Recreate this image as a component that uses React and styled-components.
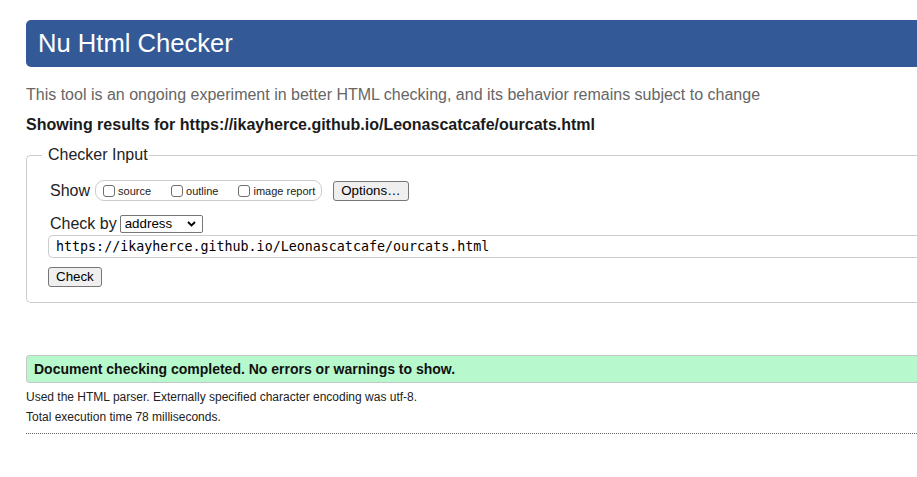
import React from 'react'
import styled, { createGlobalStyle } from 'styled-components'

const Global = createGlobalStyle`
  body {
    margin: 0;
    overflow: hidden;
    background: #fff;
    font-family: "Liberation Sans", Arial, sans-serif;
    color: #1a1a1a;
  }
`

// the page is cut off on the right in the screenshot, so the boxes
// just run into the right edge without a right border
const Page = styled.div`
  padding: 20px 0 0 26px;
`

const Header = styled.h1`
  margin: 0;
  height: 47px;
  line-height: 47px;
  padding-left: 12px;
  background: #335a97;
  color: #fff;
  font-size: 25.6px;
  font-weight: normal;
  border-radius: 5px 0 0 5px;
`

const Intro = styled.p`
  margin: 18px 0 0;
  font-size: 16px;
  line-height: 20px;
  color: #666;
  white-space: nowrap;
`

const Results = styled.p`
  margin: 10px 0 0;
  font-size: 16px;
  line-height: 20px;
  font-weight: bold;
  color: #1a1a1a;
  white-space: nowrap;
`

const Fieldset = styled.fieldset`
  margin: 10px 0 0;
  min-width: 0;
  border: 1px solid #ccc;
  border-right: 0;
  border-radius: 5px 0 0 5px;
  padding: 15px 0 15px 21px;
`

const Legend = styled.legend`
  font-size: 16px;
  line-height: 20px;
  padding: 0 1px 0 6px;
  margin-left: -6px;
  color: #222;
`

const Row = styled.div`
  display: flex;
  align-items: center;
  height: 21px;
  margin-top: ${p => p.$top || 0}px;
`

const Label = styled.span`
  font-size: 16px;
  margin-left: 2px;
  color: #222;
`

const CheckGroup = styled.div`
  display: flex;
  align-items: center;
  gap: 20px;
  box-sizing: border-box;
  height: 21px;
  margin-left: 5px;
  padding: 0 6px 0 7px;
  border: 1px solid #ccc;
  border-radius: 9px;
`

const CheckItem = styled.label`
  display: flex;
  align-items: center;
  gap: 3px;
  font-size: 11px;
  color: #222;
`

const Box = styled.span`
  width: 12px;
  height: 12px;
  box-sizing: border-box;
  border: 1px solid #6f6f6f;
  border-radius: 3px;
  background: #fff;
`

const Button = styled.button`
  margin-left: ${p => p.$left || 0}px;
  height: 20px;
  padding: 0 7px;
  font-family: "Liberation Sans", Arial, sans-serif;
  font-size: 13.33px;
  color: #000;
  background: #efefef;
  border: 1px solid #767676;
  border-radius: 3px;
`

const Select = styled.div`
  display: flex;
  align-items: center;
  justify-content: space-between;
  box-sizing: border-box;
  width: 83px;
  height: 18px;
  margin-left: 3px;
  padding: 0 6px 0 4px;
  font-size: 13.33px;
  color: #000;
  border: 1px solid #767676;
  border-radius: 2px;
  background: #fff;
`

const UrlInput = styled.input`
  display: block;
  box-sizing: border-box;
  width: 100%;
  height: 23px;
  margin-top: 1px;
  padding: 0 0 0 7px;
  font-family: "DejaVu Sans Mono", "Liberation Mono", monospace;
  font-size: 13.33px;
  color: #000;
  border: 1px solid #ccc;
  border-right: 0;
  border-radius: 5px 0 0 5px;
  outline: none;
`

const Notice = styled.div`
  margin-top: 52px;
  height: 28px;
  box-sizing: border-box;
  line-height: 26px;
  padding-left: 7px;
  font-size: 14px;
  font-weight: bold;
  color: #111;
  background: #b7f8cd;
  border: 1px solid #c6c6c6;
  border-right: 0;
  border-radius: 4px 0 0 4px;
`

const Detail = styled.p`
  margin: ${p => p.$top}px 0 0;
  font-size: 12px;
  line-height: 14px;
  color: #222;
`

const Rule = styled.hr`
  margin: 9px 0 0;
  border: 0;
  border-top: 1px dotted #666;
`

const Chevron = () => (
  <svg width="9" height="6" viewBox="0 0 9 6">
    <path d="M1 1l3.5 3.5L8 1" fill="none" stroke="#000" strokeWidth="1.8" />
  </svg>
)

const options = ['source', 'outline', 'image report']

export default function App() {
  const url = 'https://ikayherce.github.io/Leonascatcafe/ourcats.html'
  return (
    <>
      <Global />
      <Page>
        <Header>Nu Html Checker</Header>
        <Intro>This tool is an ongoing experiment in better HTML checking, and its behavior remains subject to change</Intro>
        <Results>Showing results for {url}</Results>

        <Fieldset>
          <Legend>Checker Input</Legend>
          <Row>
            <Label>Show</Label>
            <CheckGroup>
              {options.map(o => (
                <CheckItem key={o}>
                  <Box />
                  {o}
                </CheckItem>
              ))}
            </CheckGroup>
            <Button $left={11}>Options…</Button>
          </Row>
          <Row $top={12}>
            <Label>Check by</Label>
            <Select>
              address
              <Chevron />
            </Select>
          </Row>
          <UrlInput defaultValue={url} />
          <Row $top={8}>
            <Button>Check</Button>
          </Row>
        </Fieldset>

        <Notice>Document checking completed. No errors or warnings to show.</Notice>
        <Detail $top={7}>Used the HTML parser. Externally specified character encoding was utf-8.</Detail>
        <Detail $top={6}>Total execution time 78 milliseconds.</Detail>
        <Rule />
      </Page>
    </>
  )
}
